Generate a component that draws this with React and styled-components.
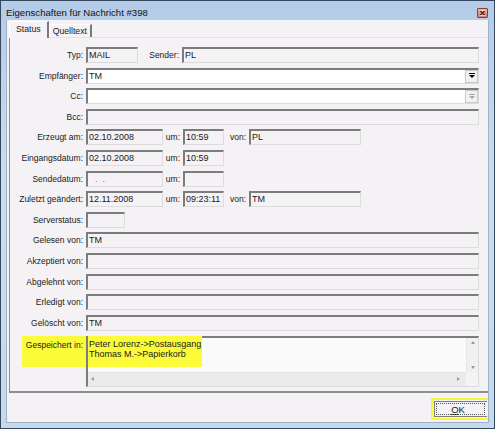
import React from "react";
import styled, { createGlobalStyle } from "styled-components";

const Global = createGlobalStyle`
  html, body { margin: 0; padding: 0; background: #ffffff; }
  * { box-sizing: border-box; }
`;

const Window = styled.div`
  width: 495px;
  height: 429px;
  border: 1px solid #35485c;
  background: linear-gradient(180deg, #b4cce8 0%, #cadcf0 40%, #c6daef 100%);
  display: flex;
  flex-direction: column;
  padding: 0 5px 5px 5px;
  font-family: "Liberation Sans", Arial, sans-serif;
  overflow: hidden;
`;

const TitleBar = styled.div`
  height: 19px;
  display: flex;
  align-items: center;
  justify-content: space-between;
  font-size: 9.6px;
  color: #111;
  padding-top: 3px;
`;

const CloseBtn = styled.div`
  width: 11px;
  height: 10px;
  margin-right: 1px;
  margin-top: 1px;
  border: 1px solid #8a3e36;
  border-radius: 1px;
  background: linear-gradient(180deg, #e9b3a8, #d07e70);
  display: flex;
  align-items: center;
  justify-content: center;
`;

const Client = styled.div`
  flex: 1;
  background: #f4f2f4;
  border: 1px solid #9fb3c8;
  border-top: none;
  display: flex;
  flex-direction: column;
  padding-left: 2px;
  overflow: hidden;
  font-size: 9px;
  color: #1a1a1a;
`;

const TabsRow = styled.div`
  height: 17px;
  display: flex;
  align-items: flex-end;
  position: relative;
  z-index: 1;
`;

const Tab = styled.div`
  height: ${p => (p.$active ? 17 : 13)}px;
  padding: 0 ${p => (p.$active ? 6 : 3)}px;
  margin-bottom: ${p => (p.$active ? -1 : 0)}px;
  display: flex;
  align-items: center;
  background: #f4f2f4;
  border-left: 1px solid #ffffff;
  border-top: 1px solid #ffffff;
  border-right: 2px solid #7a7a7a;
  font-size: 8.7px;
  padding-bottom: ${p => (p.$active ? 2 : 0)}px;
`;

const Panel = styled.div`
  height: 356px;
  margin-right: -2px;
  border-top: 1px solid #e4e2e4;
  border-left: 1px solid #8e8e8e;
  border-bottom: 2px solid #8e8e8e;
  display: flex;
  flex-direction: column;
  gap: 4.6px;
  padding-top: 9px;
`;

const Row = styled.div`
  display: flex;
  align-items: center;
  height: ${p => p.$h || 16}px;
`;

const Label = styled.div`
  width: ${p => p.$w || 73}px;
  margin-left: ${p => p.$ml || 0}px;
  margin-right: 3px;
  text-align: right;
  white-space: nowrap;
  flex: none;
  font-size: 8.5px;
`;

const Field = styled.div`
  width: ${p => (p.$w ? p.$w + "px" : "auto")};
  flex: ${p => (p.$w ? "none" : "1")};
  margin-right: ${p => (p.$w ? 0 : 11)}px;
  height: 16px;
  background: ${p => (p.$white ? "#ffffff" : "#f4f2f4")};
  border-top: 2px solid #7c7c7c;
  border-left: 2px solid #7c7c7c;
  border-right: 1px solid #dcdcdc;
  border-bottom: 1px solid #dcdcdc;
  padding: 1px 0 0 1px;
  line-height: 10px;
  white-space: nowrap;
  overflow: hidden;
  display: flex;
  align-items: flex-start;
  justify-content: space-between;
`;

const DropBtn = styled.div`
  width: 13px;
  height: 13px;
  margin-top: -1px;
  background: #f1f1f1;
  border: 1px solid #c9c9c9;
  display: flex;
  align-items: center;
  justify-content: center;
`;

const Arrow = styled.div`
  width: 0;
  height: 0;
  border-left: 3px solid transparent;
  border-right: 3px solid transparent;
  border-top: 3px solid ${p => p.$c || "#000"};
  margin-top: 1px;
  position: relative;
  &::before {
    content: "";
    position: absolute;
    left: -3px;
    top: -5px;
    width: 6px;
    height: 1px;
    background: ${p => p.$c || "#000"};
  }
`;

const StoredRow = styled.div`
  display: flex;
  align-items: flex-start;
  height: 51px;
  margin-top: 0.5px;
`;

const YellowLabel = styled.div`
  width: 64px;
  margin-left: 12px;
  height: 31px;
  background: #fbfb3a;
  text-align: right;
  padding: 4px 3px 0 0;
  flex: none;
  font-size: 8.5px;
`;

const TextArea = styled.div`
  flex: 1;
  margin-right: 11px;
  height: 51px;
  background: #fbfafb;
  border-top: 2px solid #7c7c7c;
  border-left: 2px solid #7c7c7c;
  border-right: 1px solid #dcdcdc;
  border-bottom: 1px solid #dcdcdc;
  display: grid;
  grid-template-columns: 1fr 12px;
  grid-template-rows: 34px 1fr;
`;

const TextBody = styled.div`
  padding: 0;
`;

const Highlight = styled.div`
  width: 114px;
  height: 31px;
  margin-top: -2px;
  background: #fbfb3a;
  padding: 3px 0 0 1px;
  line-height: 10.5px;
`;

const VScroll = styled.div`
  background: #f1f0f1;
  border-left: 1px solid #e6e6e6;
  display: flex;
  flex-direction: column;
  justify-content: space-between;
  align-items: center;
  padding: 3px 0;
`;

const HScroll = styled.div`
  background: #ecebec;
  border-top: 1px solid #e2e2e2;
  display: flex;
  justify-content: space-between;
  align-items: center;
  padding: 0 6px 0 3px;
`;

const Corner = styled.div`
  background: #f4f2f4;
`;

const Tri = styled.div`
  width: 0;
  height: 0;
  ${p =>
    p.$dir === "up"
      ? "border-left: 2.5px solid transparent; border-right: 2.5px solid transparent; border-bottom: 3px solid #9a9a9a;"
      : p.$dir === "down"
      ? "border-left: 2.5px solid transparent; border-right: 2.5px solid transparent; border-top: 3px solid #9a9a9a;"
      : p.$dir === "left"
      ? "border-top: 2.5px solid transparent; border-bottom: 2.5px solid transparent; border-right: 3px solid #9a9a9a;"
      : "border-top: 2.5px solid transparent; border-bottom: 2.5px solid transparent; border-left: 3px solid #9a9a9a;"}
`;

const Footer = styled.div`
  flex: 1;
  display: flex;
  justify-content: flex-end;
  align-items: flex-start;
  padding-top: 5px;
`;

const OkFrame = styled.div`
  width: 59px;
  height: 22px;
  margin-right: -2px;
  border: 2px solid #f6f63a;
  background: #f4f2f4;
  padding: 1px;
`;

const OkButton = styled.div`
  height: 100%;
  border: 1px solid #7d7d7d;
  border-right: none;
  display: flex;
  align-items: center;
  justify-content: center;
  padding-right: 6px;
  font-size: 9.5px;
  outline: 1px dotted #555;
  outline-offset: -3px;
  u { text-decoration: underline; text-underline-offset: 1px; }
`;

const Inline = styled.div`
  display: flex;
  align-items: center;
  flex: none;
`;

const SmallLabel = styled.div`
  width: ${p => p.$w}px;
  text-align: right;
  padding-right: 3px;
  flex: none;
  font-size: 8.5px;
`;

function Combo({ value, disabled }) {
  return (
    <Field $white>
      <span>{value}</span>
      <DropBtn>
        <Arrow $c={disabled ? "#a8a8a8" : "#000"} />
      </DropBtn>
    </Field>
  );
}

function DateRow({ label, date, time, von }) {
  return (
    <Row>
      <Label>{label}</Label>
      <Field $w={77}>{date}</Field>
      <SmallLabel $w={20}>um:</SmallLabel>
      <Field $w={41}>{time}</Field>
      {von !== undefined && (
        <Inline>
          <SmallLabel $w={25}>von:</SmallLabel>
          <Field $w={112}>{von}</Field>
        </Inline>
      )}
    </Row>
  );
}

export default function App() {
  return (
    <>
      <Global />
      <Window>
        <TitleBar>
          <span>Eigenschaften für Nachricht #398</span>
          <CloseBtn>
            <svg width="7" height="6" viewBox="0 0 7 6">
              <path d="M1 0.5 L6 5.5 M6 0.5 L1 5.5" stroke="#5a1e18" strokeWidth="1.1" />
              <path d="M0.5 0.5 H6.5 M0.5 5.5 H6.5" stroke="#f6e0dc" strokeWidth="0.8" />
            </svg>
          </CloseBtn>
        </TitleBar>
        <Client>
          <TabsRow>
            <Tab $active>Status</Tab>
            <Tab>Quelltext</Tab>
          </TabsRow>
          <Panel>
            <Row>
              <Label>Typ:</Label>
              <Field $w={52}>MAIL</Field>
              <Label $w={30} $ml={11}>Sender:</Label>
              <Field>PL</Field>
            </Row>
            <Row>
              <Label>Empfänger:</Label>
              <Combo value="TM" />
            </Row>
            <Row>
              <Label>Cc:</Label>
              <Combo value="" disabled />
            </Row>
            <Row>
              <Label>Bcc:</Label>
              <Field />
            </Row>
            <DateRow label="Erzeugt am:" date="02.10.2008" time="10:59" von="PL" />
            <DateRow label="Eingangsdatum:" date="02.10.2008" time="10:59" />
            <DateRow label="Sendedatum:" date={<span style={{ color: "#777", paddingLeft: 6 }}>.&nbsp;&nbsp;.</span>} time="" />
            <DateRow label="Zuletzt geändert:" date="12.11.2008" time="09:23:11" von="TM" />
            <Row>
              <Label>Serverstatus:</Label>
              <Field $w={39} />
            </Row>
            <Row>
              <Label>Gelesen von:</Label>
              <Field>TM</Field>
            </Row>
            <Row>
              <Label>Akzeptiert von:</Label>
              <Field />
            </Row>
            <Row>
              <Label>Abgelehnt von:</Label>
              <Field />
            </Row>
            <Row>
              <Label>Erledigt von:</Label>
              <Field />
            </Row>
            <Row>
              <Label>Gelöscht von:</Label>
              <Field>TM</Field>
            </Row>
            <StoredRow>
              <YellowLabel>Gespeichert in:</YellowLabel>
              <TextArea>
                <TextBody>
                  <Highlight>
                    Peter Lorenz-&gt;Postausgang
                    <br />
                    Thomas M.-&gt;Papierkorb
                  </Highlight>
                </TextBody>
                <VScroll>
                  <Tri $dir="up" />
                  <Tri $dir="down" />
                </VScroll>
                <HScroll>
                  <Tri $dir="left" />
                  <Tri $dir="right" />
                </HScroll>
                <Corner />
              </TextArea>
            </StoredRow>
          </Panel>
          <Footer>
            <OkFrame>
              <OkButton>
                <span><u>O</u>K</span>
              </OkButton>
            </OkFrame>
          </Footer>
        </Client>
      </Window>
    </>
  );
}
